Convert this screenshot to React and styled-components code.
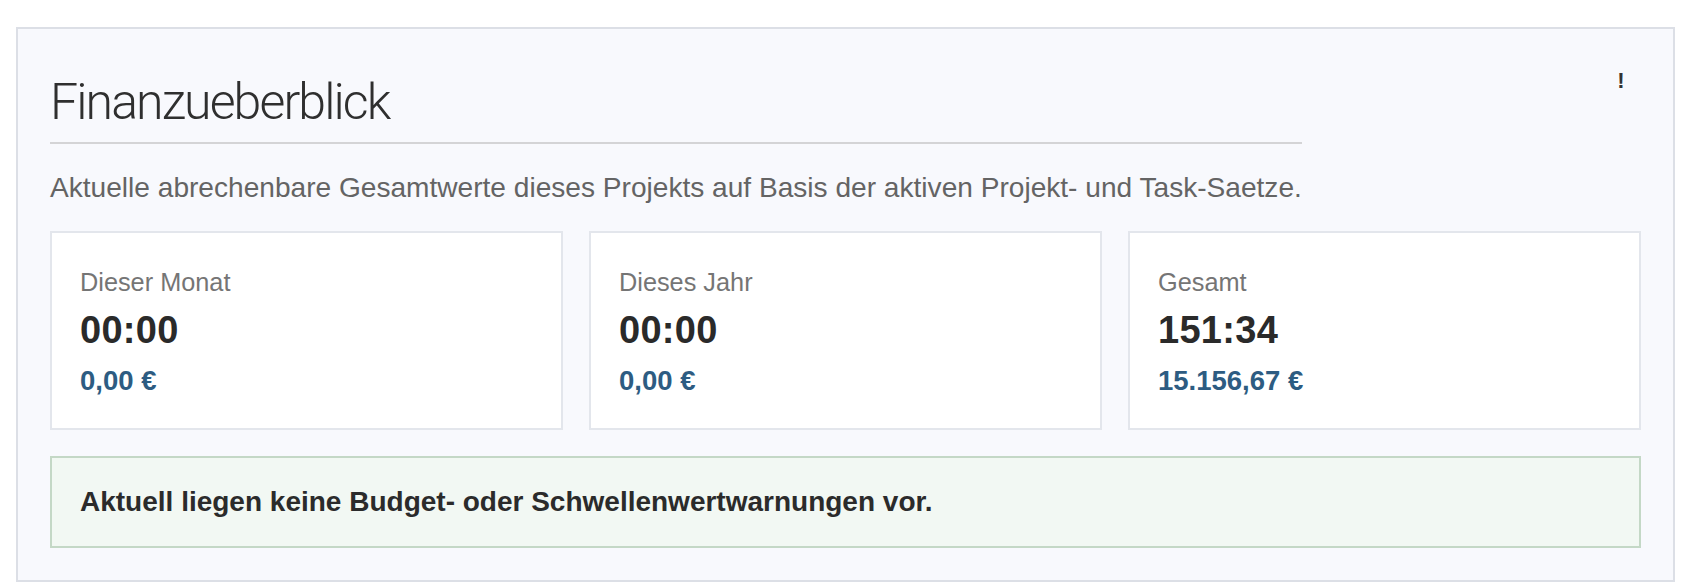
import React from 'react'
import styled, { createGlobalStyle } from 'styled-components'

const GlobalStyle = createGlobalStyle`
  html, body {
    margin: 0;
    padding: 0;
    background: #ffffff;
  }
  body {
    font-family: 'Liberation Sans', Arial, Helvetica, sans-serif;
    color: #333;
  }
  * {
    box-sizing: border-box;
  }
`

const totals = [
  { label: 'Dieser Monat', hours: '00:00', amount: '0,00 €' },
  { label: 'Dieses Jahr', hours: '00:00', amount: '0,00 €' },
  { label: 'Gesamt', hours: '151:34', amount: '15.156,67 €' },
]

export default function App() {
  return (
    <Page>
      <GlobalStyle />
      <Panel>
        {/* Kopfzeile */}
        <HeaderRow>
          <Title>Finanzueberblick</Title>
          <HintButton type="button" title="Hinweis">!</HintButton>
        </HeaderRow>

        <Intro>
          Aktuelle abrechenbare Gesamtwerte dieses Projekts auf Basis der aktiven Projekt- und Task-Saetze.
        </Intro>

        <Cards>
          {totals.map((t) => (
            <Card key={t.label}>
              <CardLabel>{t.label}</CardLabel>
              <CardHours>{t.hours}</CardHours>
              <CardAmount>{t.amount}</CardAmount>
            </Card>
          ))}
        </Cards>

        <Notice>Aktuell liegen keine Budget- oder Schwellenwertwarnungen vor.</Notice>
      </Panel>
    </Page>
  )
}

const Page = styled.div`
  padding: 27px 23px 8px 16px;
`

const Panel = styled.section`
  background: #f8f9fd;
  border: 2px solid #dcdfe6;
  padding: 32px;
`

const HeaderRow = styled.div`
  display: flex;
  align-items: flex-start;
  justify-content: space-between;
`

const Title = styled.h2`
  flex: 0 1 1252px;
  margin: 0;
  padding: 11px 0 10px;
  border-bottom: 2px solid #d4d4d6;
  font-family: Roboto, 'Liberation Sans', sans-serif;
  font-weight: 300;
  font-size: 50px;
  line-height: 60px;
  letter-spacing: -1.9px;
  color: #2f2f2f;
`

const HintButton = styled.button`
  width: 40px;
  height: 40px;
  padding: 0;
  border: none;
  background: transparent;
  font-family: 'Liberation Sans', Arial, sans-serif;
  font-weight: 700;
  font-size: 22px;
  line-height: 40px;
  text-align: center;
  color: #333;
  cursor: pointer;
`

const Intro = styled.p`
  margin: 24px 0 0;
  font-size: 28.1px;
  line-height: 39px;
  color: #646464;
`

const Cards = styled.div`
  display: grid;
  grid-template-columns: repeat(3, 1fr);
  gap: 26px;
  margin-top: 24px;
`

const Card = styled.div`
  display: flex;
  flex-direction: column;
  background: #ffffff;
  border: 2px solid #e3e6ec;
  padding: 35px 28px 32px;
`

const CardLabel = styled.div`
  font-size: 25.3px;
  line-height: 28px;
  color: #757575;
`

const CardHours = styled.div`
  margin-top: 13px;
  font-weight: 700;
  font-size: 38px;
  line-height: 42px;
  letter-spacing: 0.3px;
  color: #2a2a2a;
`

const CardAmount = styled.div`
  margin-top: 15px;
  font-weight: 700;
  font-size: 27.5px;
  line-height: 30px;
  color: #2d5c82;
`

const Notice = styled.div`
  margin-top: 26px;
  background: #f2f8f3;
  border: 2px solid #c4d8c6;
  padding: 24px 28px 24px;
  font-weight: 700;
  font-size: 28px;
  line-height: 40px;
  color: #2b2b2b;
`
